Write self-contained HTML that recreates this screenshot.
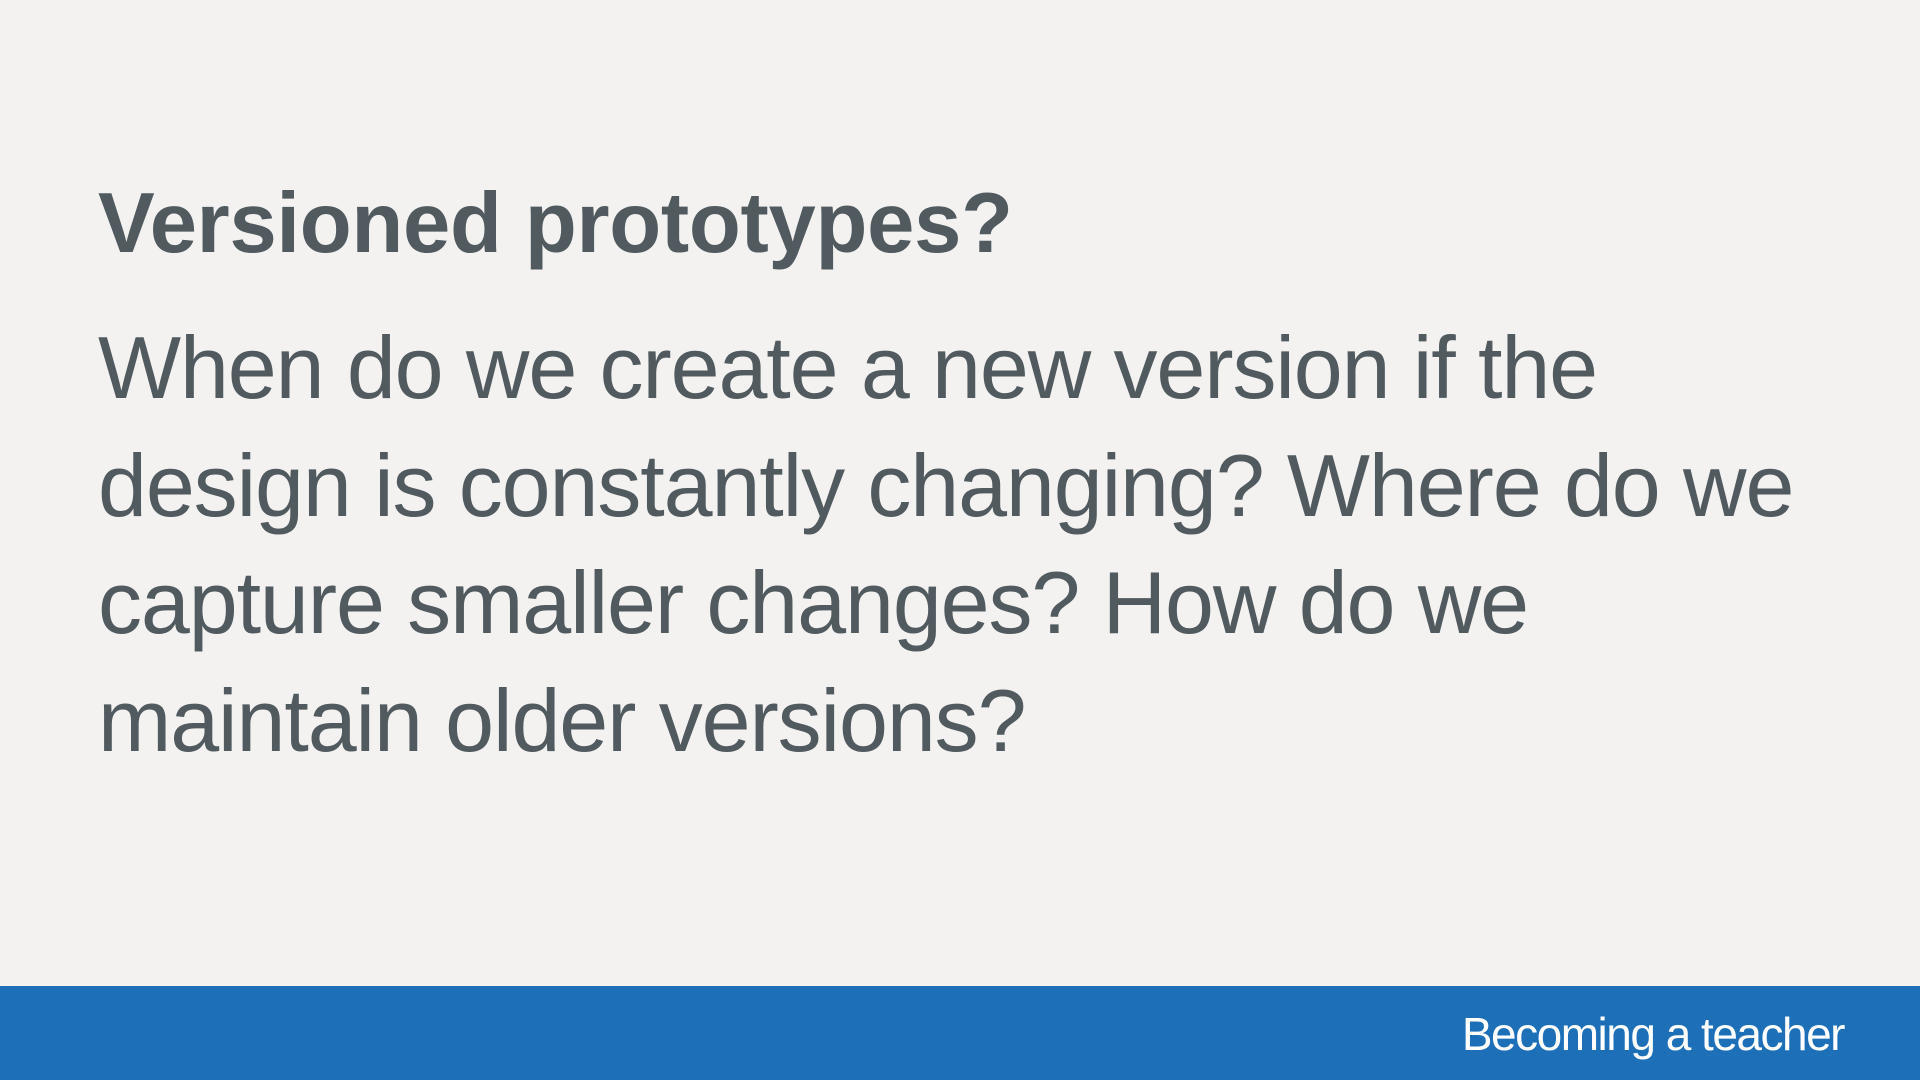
<!DOCTYPE html>
<html><head><meta charset="utf-8"><style>
html,body{margin:0;padding:0;}
body{width:1920px;height:1080px;background:#f3f2f1;position:relative;overflow:hidden;font-family:"Liberation Sans",Arial,sans-serif;color:#505a5f;}
h1{position:absolute;left:98px;top:181px;margin:0;font-size:85px;line-height:1;font-weight:bold;letter-spacing:-0.3px;}
p{position:absolute;left:98px;top:309px;margin:0;width:1780px;font-size:88px;line-height:117.5px;letter-spacing:-1.1px;}
.bar{position:absolute;left:0;top:986px;width:1920px;height:94px;background:#1d70b8;}
.bar span{position:absolute;right:76px;top:25px;color:#fff;font-size:46px;line-height:1;letter-spacing:-1.5px;}
</style></head><body>
<h1>Versioned prototypes?</h1>
<p>When do we create a new version if the<br>design is constantly changing? Where do we<br>capture smaller changes? How do we<br>maintain older versions?</p>
<div class="bar"><span>Becoming a teacher</span></div>
</body></html>
